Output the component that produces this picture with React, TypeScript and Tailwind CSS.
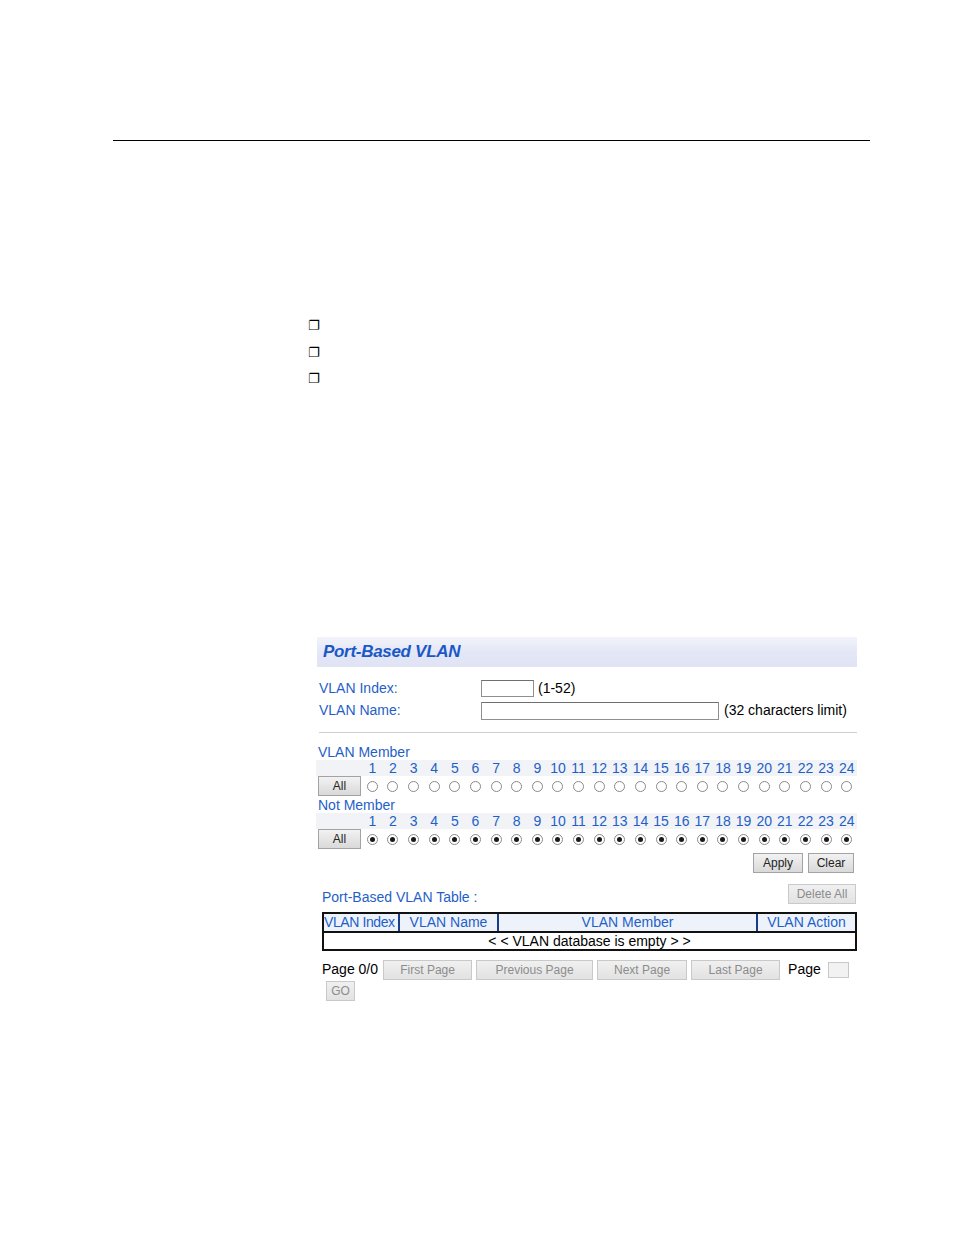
import React from "react";

const ports = Array.from({ length: 24 }, (_, i) => i + 1);

function Btn({ children, w, dim }: { children: React.ReactNode; w: string; dim?: boolean }) {
  return (
    <div
      className={`${w} h-[20px] flex items-center justify-center border text-[12px] leading-none whitespace-nowrap ${
        dim
          ? "border-[#c9c9c9] bg-gradient-to-b from-[#f0f0f0] to-[#e2e2e2] text-[#8c8c8c]"
          : "border-[#a3a3a3] bg-gradient-to-b from-[#f2f2f2] to-[#d9d9d9] text-[#222]"
      }`}
    >
      {children}
    </div>
  );
}

function Radio({ checked }: { checked?: boolean }) {
  return (
    <div className="flex items-center justify-center">
      <div className="w-[11px] h-[11px] rounded-full border border-[#8a8a8a] bg-white flex items-center justify-center">
        {checked && <div className="w-[5px] h-[5px] rounded-full bg-[#1a1a1a]" />}
      </div>
    </div>
  );
}

function PortBlock({ label, checked }: { label: string; checked?: boolean }) {
  return (
    <div>
      <div className="h-[16px] flex items-center text-[14px] leading-none text-[#1f5fc8] pl-[2px]">{label}</div>
      <div className="grid grid-cols-[46px_repeat(24,1fr)] h-[16px] bg-[#f1f3f6] text-[14px] leading-none text-[#1f5fc8]">
        <div />
        {ports.map((p) => (
          <div key={p} className="flex items-center justify-center">
            {p}
          </div>
        ))}
      </div>
      <div className="grid grid-cols-[46px_repeat(24,1fr)] h-[21px] items-center">
        <div className="pl-[2px]">
          <Btn w="w-[43px]">All</Btn>
        </div>
        {ports.map((p) => (
          <Radio key={p} checked={checked} />
        ))}
      </div>
    </div>
  );
}

export default function App() {
  return (
    <div
      className="w-[954px] h-[1235px] bg-white relative overflow-hidden"
      style={{ fontFamily: '"Liberation Sans", Arial, sans-serif' }}
    >
      <div className="pt-[140px]">
        <div className="ml-[113px] w-[757px] border-t border-black" />
      </div>

      <div
        className="ml-[308px] mt-[175px] flex flex-col gap-[7px] text-[13px] leading-[19.5px] text-black"
        style={{ fontFamily: '"DejaVu Sans", sans-serif' }}
      >
        <div>❐</div>
        <div>❐</div>
        <div>❐</div>
      </div>

      <div className="ml-[316px] mt-[248px] w-[541px]">
        {/* header */}
        <div className="h-[30px] ml-[1px] bg-gradient-to-b from-[#f2f3fa] via-[#e4e7f6] to-[#dfe3f4] flex items-center pl-[6px]">
          <span className="text-[17px] font-bold italic text-[#1a58c8] tracking-[-0.3px]">Port-Based VLAN</span>
        </div>

        {/* index */}
        <div className="mt-[13px] h-[18px] flex items-center">
          <div className="w-[165px] pl-[3px] text-[14px] text-[#1f5fc8]">VLAN Index:</div>
          <div className="w-[53px] h-[17px] border border-[#8f8f8f] border-t-[#6f6f6f] bg-white" />
          <span className="ml-[4px] text-[14px] text-black">(1-52)</span>
        </div>
        <div className="mt-[4px] h-[18px] flex items-center">
          <div className="w-[165px] pl-[3px] text-[14px] text-[#1f5fc8]">VLAN Name:</div>
          <div className="w-[238px] h-[18px] border border-[#8f8f8f] border-t-[#6f6f6f] bg-white" />
          <span className="ml-[5px] text-[14px] text-black">(32 characters limit)</span>
        </div>
        <div className="mt-[12px] ml-[3px] border-t border-[#cfcfcf]" />

        <div className="mt-[11px]">
          <PortBlock label="VLAN Member" />
          <PortBlock label="Not Member" checked />
        </div>

        <div className="mt-[3px] flex justify-end gap-[5px] pr-[3px]">
          <Btn w="w-[50px]">Apply</Btn>
          <Btn w="w-[46px]">Clear</Btn>
        </div>

        <div className="mt-[12px] h-[19px] flex items-center justify-between pl-[6px]">
          <span className="text-[14px] text-[#1f5fc8] mt-[6px]">Port-Based VLAN Table :</span>
          <div className="mr-[1px]">
            <Btn w="w-[68px]" dim>
              Delete All
            </Btn>
          </div>
        </div>

        <div className="mt-[8px] ml-[6px] border-2 border-[#111]">
          <div className="flex h-[17px] text-[14px] leading-none text-[#1f5fc8] whitespace-nowrap">
            <div className="w-[76px] border-r-2 border-[#173d8c] bg-[#eef3fb] flex items-center overflow-visible tracking-[-0.4px]">VLAN Index</div>
            <div className="w-[99px] border-r-2 border-[#173d8c] bg-[#eef3fb] flex items-center justify-center">VLAN Name</div>
            <div className="w-[259px] border-r-2 border-[#173d8c] bg-[#eef3fb] flex items-center justify-center">VLAN Member</div>
            <div className="flex-1 bg-[#eef3fb] flex items-center justify-center">VLAN Action</div>
          </div>
          <div className="h-[18px] border-t-2 border-[#111] flex items-center justify-center text-[14px] leading-none text-black">
            &lt; &lt; VLAN database is empty &gt; &gt;
          </div>
        </div>

        <div className="mt-[9px] ml-[6px] h-[20px] flex items-center">
          <span className="text-[14px] text-black">Page 0/0</span>
          <div className="ml-[5px]">
            <Btn w="w-[89px]" dim>First Page</Btn>
          </div>
          <div className="ml-[4px]">
            <Btn w="w-[117px]" dim>Previous Page</Btn>
          </div>
          <div className="ml-[4px]">
            <Btn w="w-[90px]" dim>Next Page</Btn>
          </div>
          <div className="ml-[4px]">
            <Btn w="w-[89px]" dim>Last Page</Btn>
          </div>
          <span className="ml-[8px] text-[14px] text-black">Page</span>
          <div className="ml-[7px] w-[21px] h-[16px] border border-[#c9c9c9] bg-[#f2f2f2]" />
        </div>
        <div className="mt-[1px] ml-[10px]">
          <Btn w="w-[29px]" dim>GO</Btn>
        </div>
      </div>
    </div>
  );
}
